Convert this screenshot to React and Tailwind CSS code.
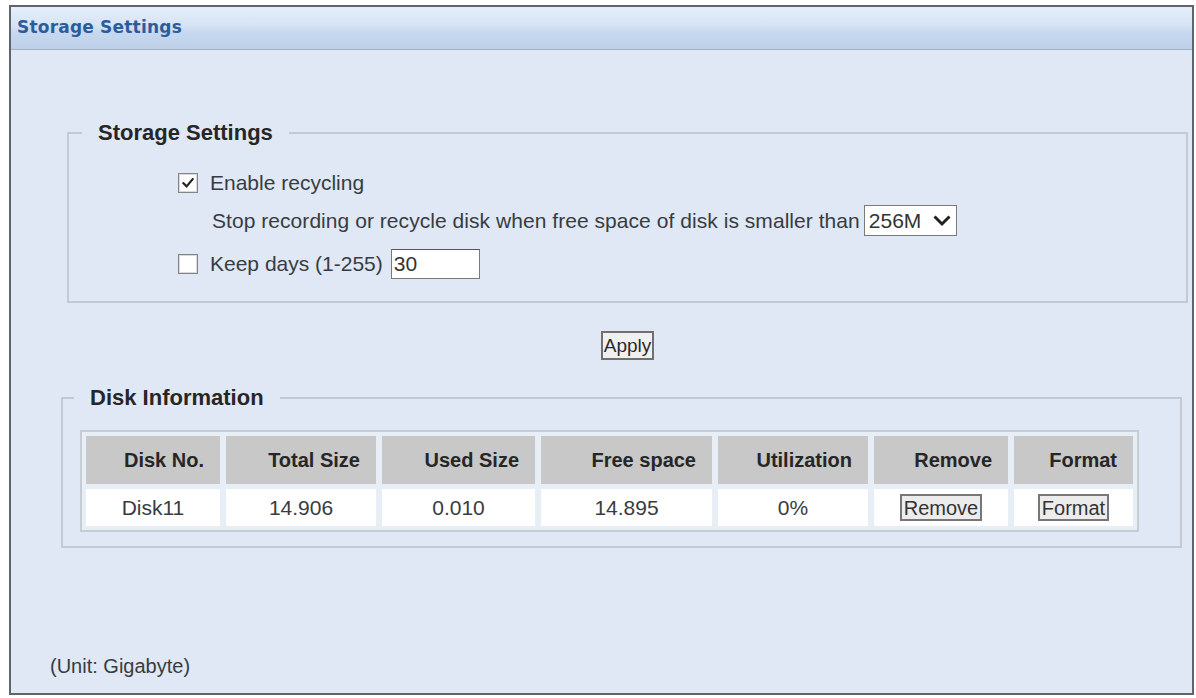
import React from "react";

function Check({ checked }) {
  return (
    <span className="w-[20px] h-[20px] shrink-0 border border-[#858585] bg-white flex items-center justify-center shadow-[inset_0_0_0_1px_#d9d9d9]">
      {checked && (
        <svg width="14" height="14" viewBox="0 0 14 14">
          <path d="M2.5 7.2 L5.6 10.4 L11.6 3.2" fill="none" stroke="#222" strokeWidth="2.2" strokeLinecap="square" />
        </svg>
      )}
    </span>
  );
}

const headers = ["Disk No.", "Total Size", "Used Size", "Free space", "Utilization", "Remove", "Format"];
const values = ["Disk11", "14.906", "0.010", "14.895", "0%"];

export default function App() {
  return (
    <div className="w-[1196px] h-[698px] bg-white pt-[5px] pl-[9px] font-['Liberation_Sans',Arial,sans-serif] text-[#383c42]">
      <div className="w-[1185px] h-[690px] border-2 border-[#5f656d] bg-[#dfe8f4] flex flex-col">
        <div className="h-[43px] shrink-0 bg-[linear-gradient(to_bottom,#e6eef9_0%,#d8e5f5_40%,#c6d8ef_62%,#bdd0e9_100%)] border-b border-[#a3b4c9] flex items-center pl-[6px]">
          <span className="font-['DejaVu_Sans',sans-serif] font-bold text-[17px] text-[#2d5c9c] tracking-[0.2px]">
            Storage Settings
          </span>
        </div>

        <fieldset className="mt-[70px] ml-[56px] mr-[4px] border-2 border-[#c5cad2] pt-[22px] pb-[22px]">
          <legend className="ml-[13px] px-[16px] text-[22px] leading-[26px] font-bold text-[#262626]">
            Storage Settings
          </legend>
          <div className="flex flex-col pl-[109px]">
            <div className="h-[30px] flex items-center gap-[12px]">
              <Check checked />
              <span className="text-[21px]">Enable recycling</span>
            </div>
            <div className="h-[31px] mt-[7px] flex items-center pl-[34px]">
              <span className="text-[21px] tracking-[0.05px]">
                Stop recording or recycle disk when free space of disk is smaller than
              </span>
              <div className="ml-[4px] w-[93px] h-[31px] bg-white border border-[#7a7a7a] flex items-center pl-[4px] pr-[4px] justify-between">
                <span className="text-[21px] text-[#333]">256M</span>
                <svg width="20" height="13" viewBox="0 0 20 13">
                  <path d="M2.5 2.5 L10 10 L17.5 2.5" fill="none" stroke="#222" strokeWidth="3" />
                </svg>
              </div>
            </div>
            <div className="h-[30px] mt-[13px] flex items-center gap-[12px]">
              <Check />
              <span className="text-[21px]">Keep days (1-255)</span>
              <div className="-ml-[4px] w-[89px] h-[30px] bg-white border border-[#7a7a7a] border-t-[#555] flex items-center pl-[2px]">
                <span className="text-[21px] text-[#333]">30</span>
              </div>
            </div>
          </div>
        </fieldset>

        <div className="ml-[56px] mr-[4px] mt-[28px] flex justify-center">
          <button className="h-[29px] px-[1px] border-2 border-[#707070] bg-[#f0f0f0] text-[19px] leading-none text-[#2a2a2a]">
            Apply
          </button>
        </div>

        <fieldset className="mt-[25px] ml-[50px] mr-[10px] border-2 border-[#c5cad2] pt-[19px] pb-[14px]">
          <legend className="ml-[11px] px-[16px] text-[22px] leading-[26px] font-bold text-[#262626]">
            Disk Information
          </legend>
          <div className="ml-[17px] w-fit border-2 border-[#c6ccd4] bg-[#e8eef6] p-[4px] grid grid-cols-[134px_150px_153px_171px_150px_134px_119px] gap-x-[6px] gap-y-[5px]">
            {headers.map((h) => (
              <div key={h} className="h-[48px] bg-[#c8c8c8] flex items-center justify-end pr-[16px] font-bold text-[20px] text-[#262626]">
                {h}
              </div>
            ))}
            {values.map((v, i) => (
              <div key={i} className="h-[37px] bg-white flex items-center justify-center text-[21px] text-[#383c42]">
                {v}
              </div>
            ))}
            <div className="h-[37px] bg-white flex items-center justify-center">
              <button className="h-[27px] px-[2px] border-2 border-[#777] bg-[#ececec] text-[20px] leading-none text-[#333]">
                Remove
              </button>
            </div>
            <div className="h-[37px] bg-white flex items-center justify-center">
              <button className="h-[27px] px-[2px] border-2 border-[#777] bg-[#ececec] text-[20px] leading-none text-[#333]">
                Format
              </button>
            </div>
          </div>
        </fieldset>

        <div className="mt-auto pb-[15px] pl-[39px] text-[20px] leading-[24px]">(Unit: Gigabyte)</div>
      </div>
    </div>
  );
}
